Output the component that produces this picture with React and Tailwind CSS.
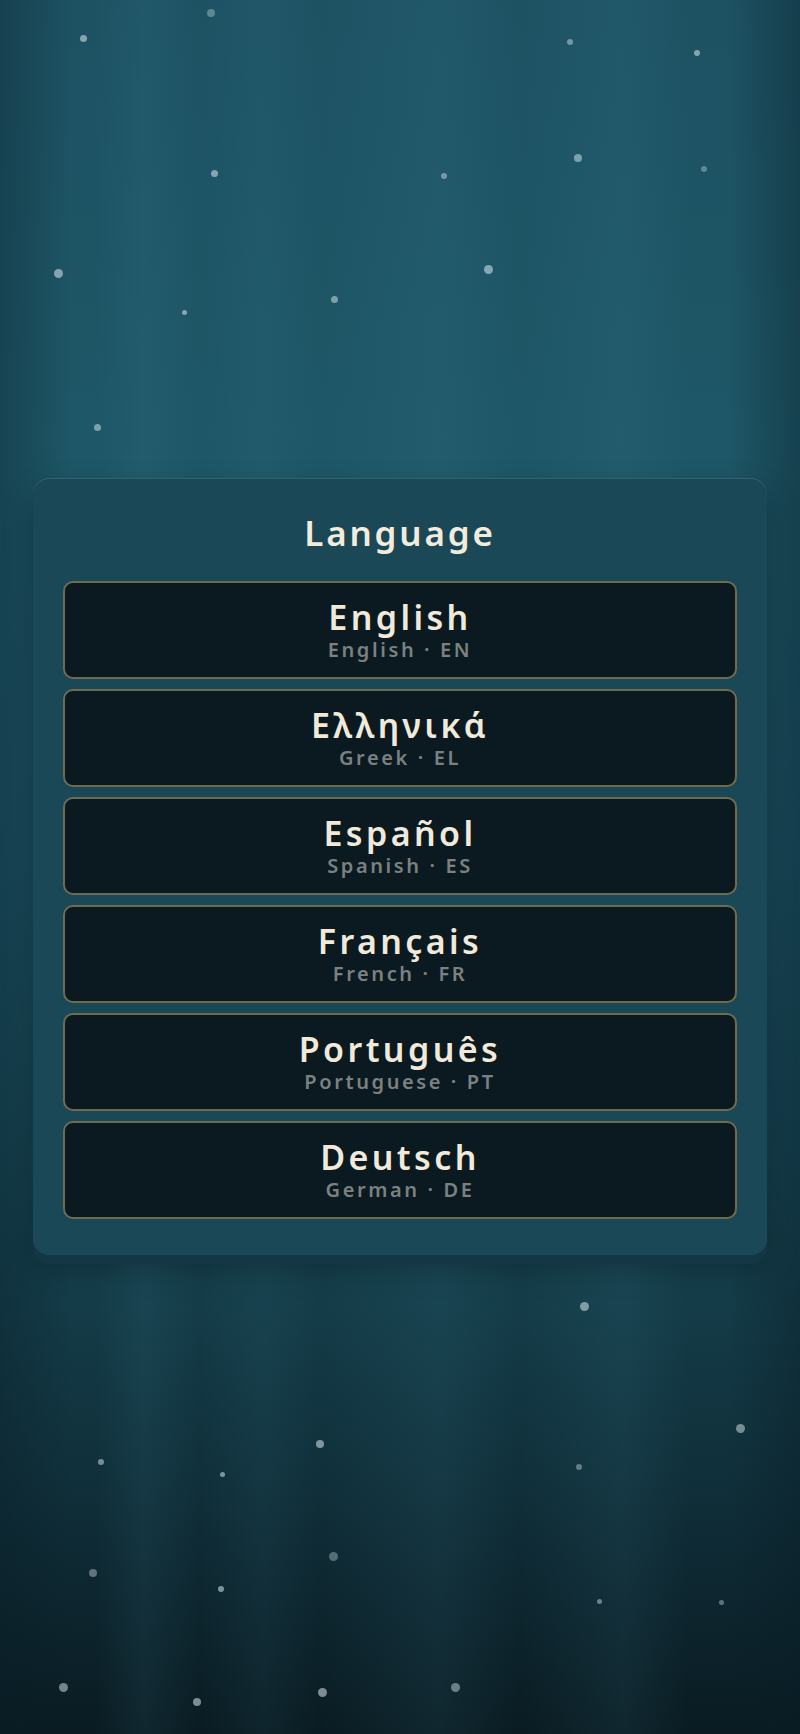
import React from 'react';

const LANGUAGES = [
  { native: 'English', name: 'English', code: 'EN' },
  { native: 'Ελληνικά', name: 'Greek', code: 'EL' },
  { native: 'Español', name: 'Spanish', code: 'ES' },
  { native: 'Français', name: 'French', code: 'FR' },
  { native: 'Português', name: 'Portuguese', code: 'PT' },
  { native: 'Deutsch', name: 'German', code: 'DE' },
];

// snow particles: [x, y, size, opacity]
const FLAKES = [
  [211, 13, 8, 0.35], [83, 38, 7, 0.55], [570, 42, 6, 0.45], [697, 53, 6, 0.55],
  [214, 173, 7, 0.55], [444, 176, 6, 0.45], [578, 158, 8, 0.5], [704, 169, 6, 0.35],
  [58, 273, 9, 0.55], [488, 269, 9, 0.55], [334, 299, 7, 0.5], [184, 312, 5, 0.55],
  [97, 427, 7, 0.5],
  [584, 1306, 9, 0.55], [740, 1428, 9, 0.5], [320, 1444, 8, 0.55], [101, 1462, 6, 0.5],
  [222, 1474, 5, 0.55], [579, 1467, 6, 0.4], [333, 1556, 9, 0.35], [93, 1573, 8, 0.4],
  [221, 1589, 6, 0.55], [599, 1601, 5, 0.45], [721, 1602, 5, 0.4], [63, 1687, 9, 0.5],
  [197, 1702, 8, 0.55], [322, 1692, 9, 0.55], [455, 1687, 9, 0.45],
];

function LanguageButton({ lang }) {
  return (
    <button className="flex h-[98px] w-full flex-col items-center justify-center rounded-[10px] border-2 border-[#6e6c4f] bg-[#0b1a20] pt-[1px]">
      <span className="text-[34px] font-semibold leading-[32px] tracking-[0.1em] text-[#f1e9da]">
        {lang.native}
      </span>
      <span className="mt-[6px] text-[20px] font-semibold leading-[22px] tracking-[0.13em] text-[#7a8180]">
        {lang.name} · {lang.code}
      </span>
    </button>
  );
}

export default function App() {
  return (
    <div
      className="relative min-h-[1734px] w-full overflow-hidden bg-[linear-gradient(90deg,rgba(8,28,38,0.32)_0%,rgba(8,28,38,0)_9%,rgba(8,28,38,0)_91%,rgba(8,28,38,0.38)_100%),linear-gradient(90deg,rgba(0,0,0,0)_12%,rgba(70,140,160,0.10)_18%,rgba(0,0,0,0)_25%,rgba(70,140,160,0.08)_33%,rgba(0,0,0,0)_40%,rgba(70,140,160,0.10)_55%,rgba(0,0,0,0)_65%,rgba(70,140,160,0.10)_78%,rgba(0,0,0,0)_86%),linear-gradient(180deg,#1d5263_0%,#1e5767_25%,#1c5163_50%,#16424f_70%,#10303b_85%,#0a1b22_100%)] pt-[478px] font-['Noto_Sans',sans-serif]"
    >
      {FLAKES.map(([x, y, s, o], i) => (
        <span
          key={i}
          className="absolute rounded-full bg-[#dbe8ec] blur-[0.6px]"
          style={{ left: x - s / 2, top: y - s / 2, width: s, height: s, opacity: o }}
        />
      ))}

      <div className="relative mx-auto w-[734px] rounded-2xl bg-[#1b4857] px-[30px] pb-[36px] pt-[35px] shadow-[inset_0_1px_0_rgba(120,170,185,0.25),0_9px_0_#133744,0_14px_30px_rgba(0,0,0,0.25)]">
        <h1 className="text-center text-[35px] font-semibold leading-[40px] tracking-[0.08em] text-[#f3ecdc]">
          Language
        </h1>
        <div className="mt-[28px] flex flex-col gap-[10px]">
          {LANGUAGES.map((lang) => (
            <LanguageButton key={lang.code} lang={lang} />
          ))}
        </div>
      </div>
    </div>
  );
}
